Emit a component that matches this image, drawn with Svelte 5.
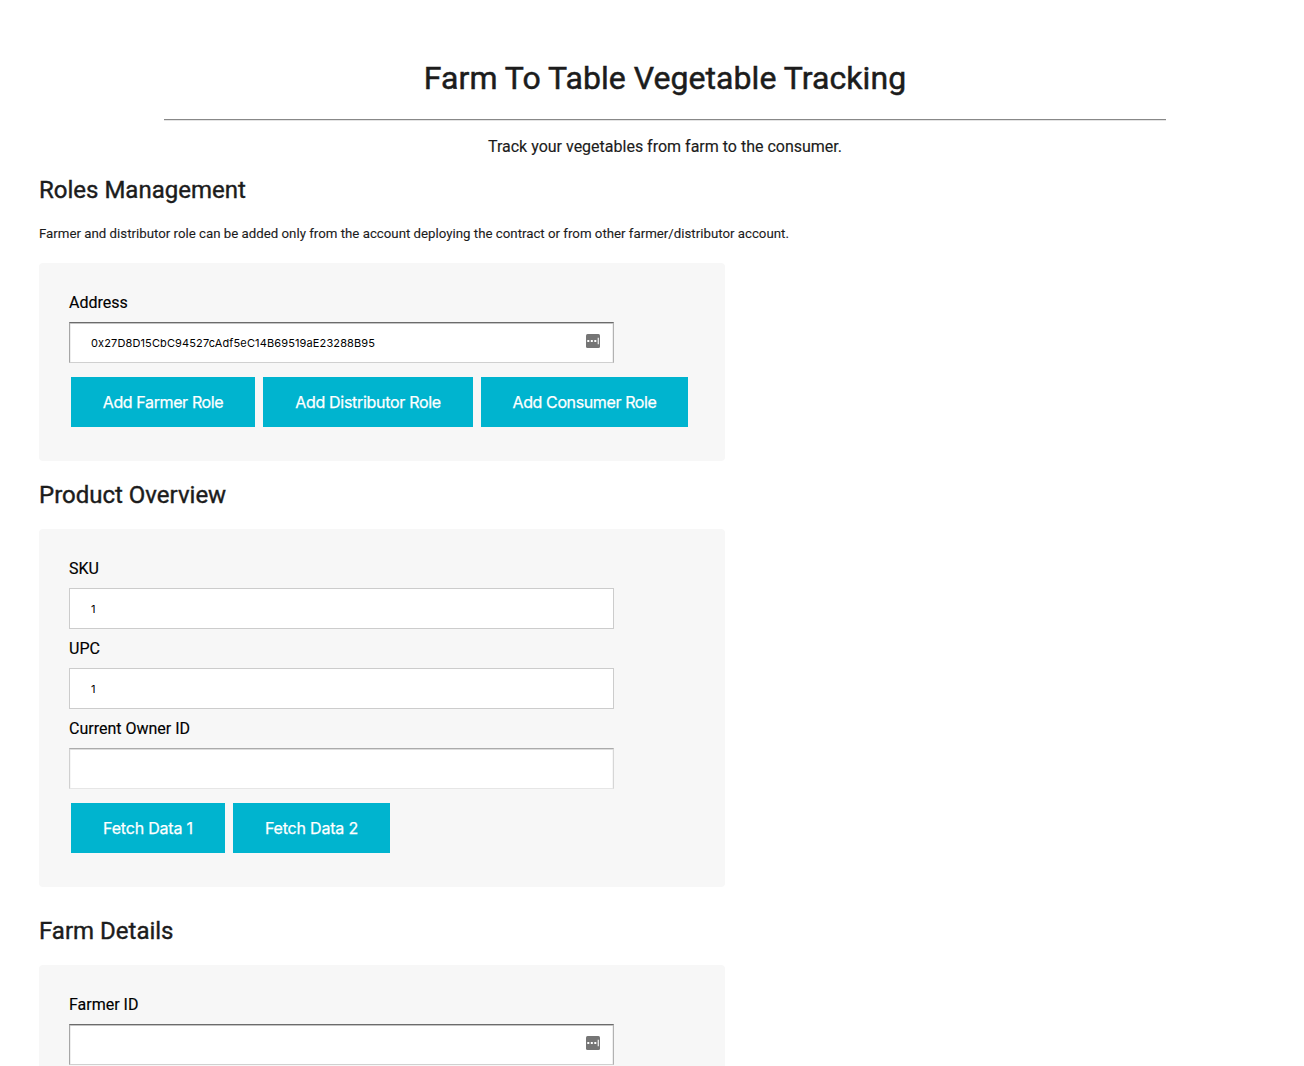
<script>
  let address = $state('0x27D8D15CbC94527cAdf5eC14B69519aE23288B95');
  let sku = $state('1');
  let upc = $state('1');
  let owner = $state('');
  let farmer = $state('');
</script>

{#snippet autofill()}
  <svg class="autofill" viewBox="0 0 14 14" width="14" height="14" aria-hidden="true">
    <rect width="14" height="14" rx="1.5" fill="#757575" />
    <path d="M1.3 6h2v2h-2zM4.8 6h2v2h-2zM8.3 6h2v2h-2zM11.7 3.8h1.1v6.4h-1.1z" fill="#fff" />
  </svg>
{/snippet}

<main>
  <header>
    <h1>Farm To Table Vegetable Tracking</h1>
    <hr />
    <p>Track your vegetables from farm to the consumer.</p>
  </header>

  <h2 class="management">Roles Management</h2>
  <p class="note">Farmer and distributor role can be added only from the account deploying the contract or from other farmer/distributor account.</p>
  <section class="roles">
    <label for="address">Address</label>
    <div class="field"><input id="address" class="inset" bind:value={address} />{@render autofill()}</div>
    <div class="actions">
      <button class="farmer">Add Farmer Role</button>
      <button class="distributor">Add Distributor Role</button>
      <button class="consumer">Add Consumer Role</button>
    </div>
  </section>

  <h2>Product Overview</h2>
  <section class="overview">
    <label for="sku">SKU</label>
    <div class="field"><input id="sku" bind:value={sku} /></div>
    <label for="upc">UPC</label>
    <div class="field"><input id="upc" bind:value={upc} /></div>
    <label for="owner">Current Owner ID</label>
    <div class="field"><input id="owner" class="soft" bind:value={owner} /></div>
    <div class="actions">
      <button class="fetch1">Fetch Data 1</button>
      <button class="fetch2">Fetch Data 2</button>
    </div>
  </section>

  <h2 class="details">Farm Details</h2>
  <section class="farm">
    <label for="farmer">Farmer ID</label>
    <div class="field"><input id="farmer" class="inset" bind:value={farmer} />{@render autofill()}</div>
  </section>
</main>

<style>
  :global(body) { background: #fff; overflow: hidden; }
  main {
    box-sizing: border-box;
    height: 1066px;
    overflow: hidden;
    padding: 58px 0 0 39px;
    font-family: Roboto, sans-serif;
    font-size: 16px;
    color: #1c1c1c;
  }
  header { width: 1252px; text-align: center; }
  h1 { margin: 0; font-size: 32px; line-height: 40px; font-weight: 400; letter-spacing: 0.05px; -webkit-text-stroke: 0.5px; }
  hr { width: 1002px; margin: 21px auto 16px; border: 0; border-top: 1px solid #888; border-bottom: 1px solid #e4e4e4; height: 0; }
  header p { margin: 0; line-height: 20px; -webkit-text-stroke: 0.15px; }
  h2 { margin: 18px 0 0; font-size: 24px; line-height: 32px; font-weight: 400; -webkit-text-stroke: 0.4px; }
  .management { margin-top: 17px; }
  .note { margin: 18px 0 19px; font-size: 13.28px; line-height: 20px; -webkit-text-stroke: 0.1px; }
  section {
    box-sizing: border-box;
    width: 686px;
    padding: 30px 30px 0;
    background: #f7f7f7;
    border-radius: 4px;
    color: #000;
  }
  .roles { height: 198px; }
  .overview { height: 358px; margin-top: 18px; }
  .farm { height: 120px; margin-top: 18px; }
  .details { margin-top: 28px; }
  label { display: block; height: 20px; line-height: 20px; margin-bottom: 9px; -webkit-text-stroke: 0.15px; }
  .field { position: relative; width: 545px; height: 41px; margin-bottom: 10px; }
  input {
    box-sizing: border-box;
    display: block;
    width: 545px;
    height: 41px;
    padding: 1px 21px 0;
    border: 1px solid #ccc;
    border-radius: 0;
    background: #fff;
    color: #000;
    font: 11px Inter, sans-serif;
    letter-spacing: 0.13px;
    outline: 0;
  }
  .inset { border-color: #6b6b6b #b2b2b2 #d0d0d0 #a6a6a6; box-shadow: inset 0 1px #c4c4c4, inset 1px 0 #eee, inset -1px 0 #eee; }
  .soft { border-color: #ababab #d6d6d6 #e6e6e6 #d0d0d0; box-shadow: inset 0 1px #ddd, inset 1px 0 #f6f6f6, inset -1px 0 #f6f6f6; }
  .autofill { position: absolute; right: 14px; top: 12px; }
  .actions { display: flex; gap: 8px; padding: 4px 0 0 2px; }
  button {
    height: 50px;
    padding: 0;
    border: 0;
    background: #00b4cf;
    color: #fff;
    font: 16px Inter, sans-serif;
    letter-spacing: -0.38px;
    -webkit-text-stroke: 0.25px;
  }
  .farmer { width: 184px; }
  .distributor { width: 210px; letter-spacing: -0.3px; }
  .consumer { width: 207px; }
  .fetch1 { width: 154px; letter-spacing: -0.2px; }
  .fetch2 { width: 157px; letter-spacing: -0.2px; }
</style>
